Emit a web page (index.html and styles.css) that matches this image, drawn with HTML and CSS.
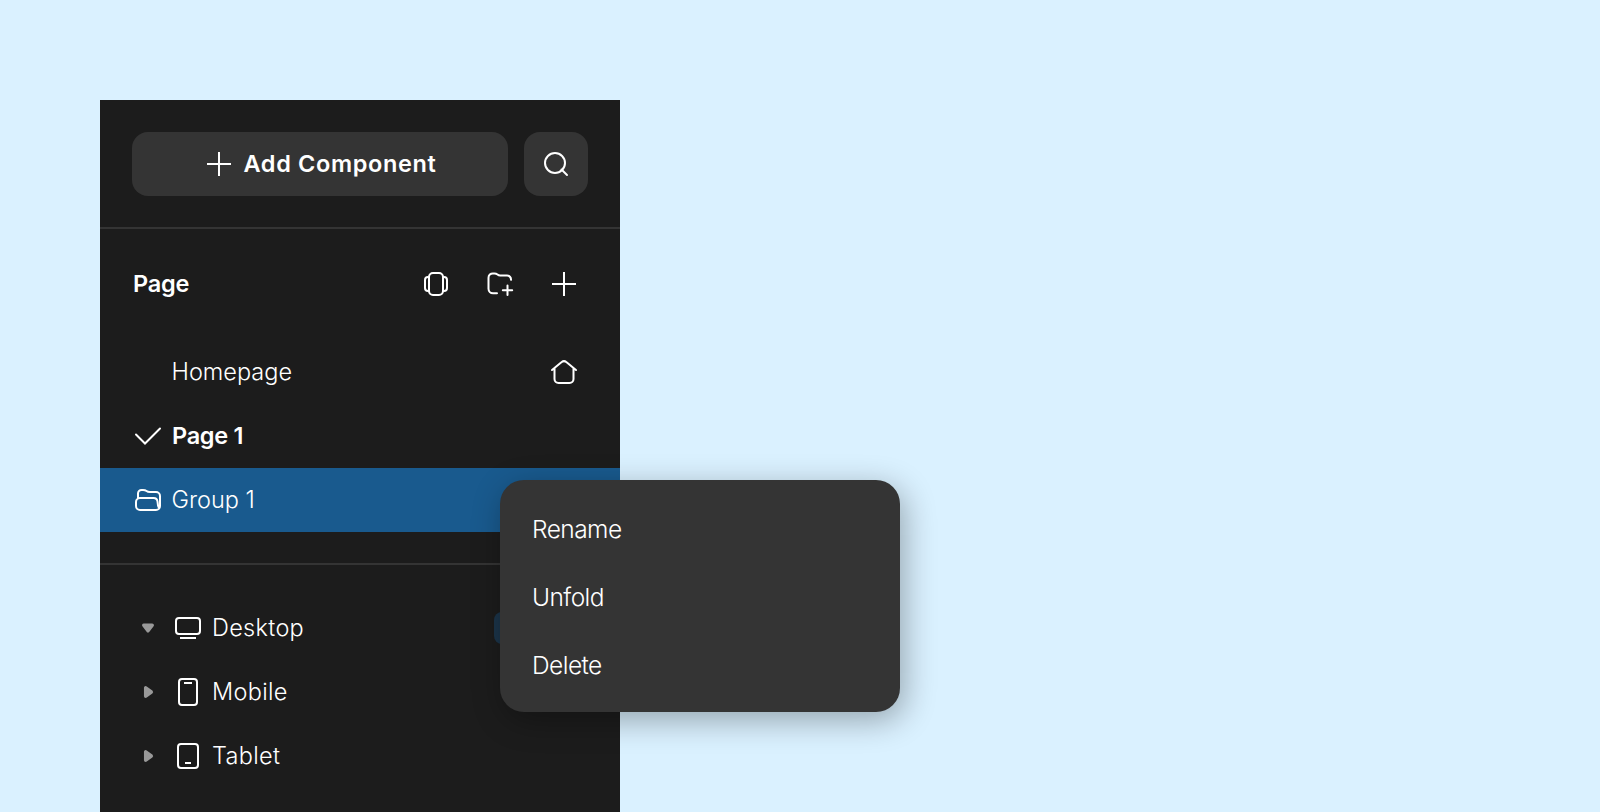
FILE: index.html
```html
<!DOCTYPE html>
<html lang="en">
<head>
<meta charset="utf-8">
<title>Pages</title>
<link rel="stylesheet" href="styles.css">
</head>
<body>
<main class="stage">
  <aside class="panel">
    <header class="toolbar">
      <button class="btn add">
        <svg class="icon" viewBox="0 0 32 32"><path d="M16 4v24M4 16h24"/></svg>
        <span class="add-text">Add Component</span>
      </button>
      <button class="btn search" aria-label="Search">
        <svg class="icon" viewBox="0 0 32 32"><circle cx="15" cy="15" r="10"/><path d="M21.500 21.500l5.500 5.500" stroke-linecap="round"/></svg>
      </button>
    </header>
    <section class="pages">
      <div class="head">
        <h2 class="title">Page</h2>
        <div class="actions">
          <svg class="icon" viewBox="0 0 32 32"><rect x="9" y="5" width="14" height="22" rx="4"/><path d="M9 9H8a3 3 0 0 0-3 3v8a3 3 0 0 0 3 3h1M23 9h1a3 3 0 0 1 3 3v8a3 3 0 0 1-3 3h-1"/></svg>
          <svg class="icon" viewBox="0 0 32 32"><path d="M13 25.300H9A4.500 4.500 0 0 1 4.500 20.800V9.700A4.300 4.300 0 0 1 9 5.400h1.500c1.200 0 2 .3 3 1.100 .8 .7 1.500 1 2.700 1H23a4 4 0 0 1 4 4.300M23.500 17.600v9.400M18.800 22.300h9.400" stroke-linecap="round"/></svg>
          <svg class="icon" viewBox="0 0 32 32"><path d="M16 4v24M4 16h24"/></svg>
        </div>
      </div>
      <div class="row">
        <span class="slot"></span>
        <span class="label">Homepage</span>
        <svg class="icon" viewBox="0 0 32 32"><path d="M4 14L13.700 6.100a3.500 3.500 0 0 1 4.600 0L28 14M6.500 12v11a4 4 0 0 0 4 4h11a4 4 0 0 0 4-4V12" stroke-linecap="round"/></svg>
      </div>
      <div class="row">
        <svg class="icon" viewBox="0 0 32 32"><path d="M4 14.500L13 23.500 28 8.500" stroke-linecap="round"/></svg>
        <span class="label bold">Page 1</span>
      </div>
      <div class="row selected">
        <svg class="icon" viewBox="0 0 32 32"><path d="M6 14.500V9.500A3.500 3.500 0 0 1 9.500 6H11c1.500 0 2.500.2 3.500 1S16.500 8 18 8h6a4 4 0 0 1 4 4v10M8 14h13.500a4 4 0 0 1 4 3.500l.6 4.500a2 2 0 0 0 1.900 1.800M28 22a4 4 0 0 1-4 4H8A4 4 0 0 1 4 22v-4a4 4 0 0 1 4-4"/></svg>
        <span class="label">Group 1</span>
      </div>
    </section>
    <section class="layers">
      <div class="row">
        <svg class="icon caret" viewBox="0 0 32 32"><path d="M11.800 13.200h8.400L16 18.800z"/></svg>
        <svg class="icon device" viewBox="0 0 32 32"><rect x="4" y="6" width="24" height="16" rx="3"/><path d="M8 26h16"/></svg>
        <span class="label device-name">Desktop</span>
        <span class="badge"></span>
      </div>
      <div class="row">
        <svg class="icon caret" viewBox="0 0 32 32"><path d="M13.700 11.800v8.400l5.600-4.200z"/></svg>
        <svg class="icon device" viewBox="0 0 32 32"><rect x="7" y="3" width="18" height="26" rx="3"/><path d="M12 7h8"/></svg>
        <span class="label device-name">Mobile</span>
      </div>
      <div class="row">
        <svg class="icon caret" viewBox="0 0 32 32"><path d="M13.700 11.800v8.400l5.600-4.200z"/></svg>
        <svg class="icon device" viewBox="0 0 32 32"><rect x="6" y="4" width="20" height="24" rx="3"/><path d="M13 23h6"/></svg>
        <span class="label device-name">Tablet</span>
      </div>
    </section>
  </aside>
  <nav class="menu">
    <span class="item">Rename</span>
    <span class="item">Unfold</span>
    <span class="item">Delete</span>
  </nav>
</main>
</body>
</html>
```
FILE: styles.css
```css
* { box-sizing: border-box; }
body {
  margin: 0;
  background: #daf1ff;
  color: #fff;
  font: 350 23.5px/32px Inter, "Liberation Sans", sans-serif;
}
.stage { position: relative; height: 812px; padding: 100px 0 0 100px; overflow: hidden; }
.panel { width: 520px; height: 712px; background: #1c1c1c; overflow: hidden; }
.icon { width: 32px; height: 32px; flex: none; fill: none; stroke: #fff; stroke-width: 2; }
.toolbar { display: flex; gap: 16px; height: 129px; padding: 32px 32px 0; border-bottom: 2px solid #343434; }
.btn {
  display: flex; align-items: center; justify-content: center; height: 64px; padding: 0;
  border: 0; border-radius: 16px; background: #343434; color: #fff; font: inherit; font-weight: 600;
}
.add { flex: 1; gap: 8px; }
.add-text { letter-spacing: .64px; }
.search { width: 64px; }
.pages { height: 336px; padding-top: 23px; border-bottom: 2px solid #343434; }
.head { display: flex; align-items: center; justify-content: space-between; height: 64px; padding: 0 40px 0 33px; margin-bottom: 24px; }
.title { margin: 0; font-size: inherit; font-weight: 600; letter-spacing: -.2px; }
.actions { display: flex; gap: 32px; }
.row { display: flex; align-items: center; height: 64px; padding: 0 40px 0 32px; }
.selected { background: #195a8e; }
.slot { width: 32px; }
.label { flex: 1; padding-left: 7.5px; white-space: nowrap; }
.bold { padding-left: 8px; font-weight: 600; letter-spacing: -.3px; }
.device-name { padding-left: 8px; letter-spacing: .3px; }
.layers { padding-top: 31px; }
.caret { fill: #999; stroke: #999; stroke-width: 3.5; stroke-linejoin: round; }
.device { margin-left: 8px; }
.badge { width: 86px; height: 32px; border-radius: 8px; background: #1b3449; }
.menu {
  position: absolute; left: 500px; top: 480px; width: 400px; height: 232px; padding: 15px 32px;
  display: flex; flex-direction: column; border-radius: 24px; background: #343434;
  box-shadow: 4px 8px 32px rgba(0, 0, 0, .32);
}
.item { height: 68px; line-height: 68px; flex: none; font-size: 24.5px; letter-spacing: -.55px; white-space: nowrap; }
```
